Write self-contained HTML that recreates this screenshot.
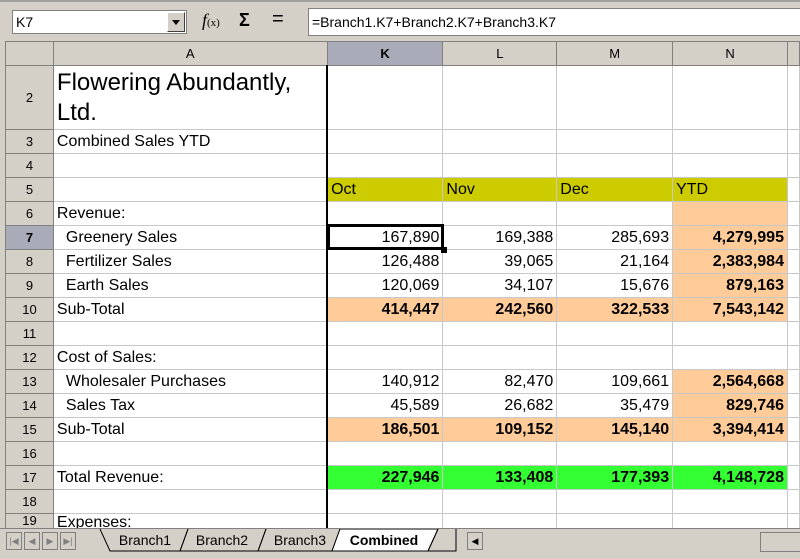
<!DOCTYPE html>
<html><head><meta charset="utf-8"><style>
*{margin:0;padding:0;box-sizing:border-box}
body{width:800px;height:559px;overflow:hidden;background:#d4d0c8;font-family:"Liberation Sans",sans-serif;position:relative}
.tb{position:absolute;left:0;top:0;width:800px;height:41px;background:#d4d0c8;border-top:2px solid #a0a0a0}
.nb{position:absolute;left:12px;top:8px;width:175px;height:24px;background:#fff;border:1px solid #808080;font-size:14px;line-height:22px;padding-left:3px}
.dd{position:absolute;right:1px;top:1px;width:18px;height:20px;background:#d4d0c8;border:1px solid #404040;border-top-color:#fff;border-left-color:#fff}
.dd:after{content:"";position:absolute;left:4px;top:7px;border:4px solid transparent;border-top:5px solid #000}
.fx{position:absolute;left:202px;top:8px;font-family:"Liberation Serif",serif;font-style:italic;font-size:18px}
.fx small{font-size:11px;font-style:normal}
.sg{position:absolute;left:239px;top:8px;font-size:18px;font-weight:bold}
.eq{position:absolute;left:272px;top:6px;font-size:20px}
.fi{position:absolute;left:308px;top:6px;width:492px;height:28px;background:#fff;border:1px solid #808080;border-right:none;font-size:14px;line-height:26px;padding-left:3px}
table{position:absolute;left:5px;top:41px;border-collapse:collapse;table-layout:fixed;background:#fff}
td{border:1px solid #c8c8c8;height:24px;font-size:16px;white-space:nowrap;overflow:hidden;padding:0 3px;line-height:22px}
td.h{background:#d4d0c8;border:1px solid #808080;text-align:center;font-size:13px}
td.s{background:#a9abb8;font-weight:bold}
td.a{border-right:2px solid #000}
.r{text-align:right}.b{font-weight:bold}
.y{background:#cccc00}.o{background:#ffcc99}.g{background:#33ff33}
.i{padding-left:12px}
.sel{position:absolute;left:327px;top:224px;width:117px;height:26px;border:3px solid #000}
.sel:after{content:"";position:absolute;right:-6px;bottom:-6px;width:6px;height:6px;background:#000}
.tabs{position:absolute;left:0;top:528px;width:800px;height:31px;background:#d4d0c8;border-top:1px solid #808080}
.nav{position:absolute;top:3px;width:16px;height:18px;border:1px solid #808080;background:#d4d0c8;font-size:9px;text-align:center;line-height:16px;color:#808080}
.tab{position:absolute;top:0;height:22px;font-size:14px;line-height:22px;text-align:center}
.sb{position:absolute;left:760px;top:3px;width:40px;height:20px;background:#d4d0c8;border:1px solid #808080;border-right:none}
</style></head><body>
<div class="tb">
<div class="nb">K7<div class="dd"></div></div>
<div class="fx">f<small>(x)</small></div>
<div class="sg">Σ</div>
<div class="eq">=</div>
<div class="fi">=Branch1.K7+Branch2.K7+Branch3.K7</div>
</div>
<table>
<colgroup><col style="width:48px"><col style="width:274px"><col style="width:116px"><col style="width:114px"><col style="width:116px"><col style="width:115px"><col style="width:12px"></colgroup>
<tr><td class="h">&nbsp;</td><td class="h a" style="border-right:1px solid #808080">A</td><td class="h s">K</td><td class="h">L</td><td class="h">M</td><td class="h">N</td><td class="h"></td></tr>
<tr style="height:64px"><td class="h" style="height:64px">2</td><td class="a" style="font-size:24px;line-height:30px;white-space:normal;height:64px">Flowering Abundantly, Ltd.</td><td></td><td></td><td></td><td></td><td></td></tr>
<tr><td class="h">3</td><td class="a">Combined Sales YTD</td><td></td><td></td><td></td><td></td><td></td></tr>
<tr><td class="h">4</td><td class="a"></td><td></td><td></td><td></td><td></td><td></td></tr>
<tr><td class="h">5</td><td class="a"></td><td class="y">Oct</td><td class="y">Nov</td><td class="y">Dec</td><td class="y">YTD</td><td></td></tr>
<tr><td class="h">6</td><td class="a">Revenue:</td><td></td><td></td><td></td><td class="o"></td><td></td></tr>
<tr><td class="h s">7</td><td class="a i">Greenery Sales</td><td class="r">167,890</td><td class="r">169,388</td><td class="r">285,693</td><td class="r b o">4,279,995</td><td></td></tr>
<tr><td class="h">8</td><td class="a i">Fertilizer Sales</td><td class="r">126,488</td><td class="r">39,065</td><td class="r">21,164</td><td class="r b o">2,383,984</td><td></td></tr>
<tr><td class="h">9</td><td class="a i">Earth Sales</td><td class="r">120,069</td><td class="r">34,107</td><td class="r">15,676</td><td class="r b o">879,163</td><td></td></tr>
<tr><td class="h">10</td><td class="a">Sub-Total</td><td class="r b o">414,447</td><td class="r b o">242,560</td><td class="r b o">322,533</td><td class="r b o">7,543,142</td><td></td></tr>
<tr><td class="h">11</td><td class="a"></td><td></td><td></td><td></td><td></td><td></td></tr>
<tr><td class="h">12</td><td class="a">Cost of Sales:</td><td></td><td></td><td></td><td></td><td></td></tr>
<tr><td class="h">13</td><td class="a i">Wholesaler Purchases</td><td class="r">140,912</td><td class="r">82,470</td><td class="r">109,661</td><td class="r b o">2,564,668</td><td></td></tr>
<tr><td class="h">14</td><td class="a i">Sales Tax</td><td class="r">45,589</td><td class="r">26,682</td><td class="r">35,479</td><td class="r b o">829,746</td><td></td></tr>
<tr><td class="h">15</td><td class="a">Sub-Total</td><td class="r b o">186,501</td><td class="r b o">109,152</td><td class="r b o">145,140</td><td class="r b o">3,394,414</td><td></td></tr>
<tr><td class="h">16</td><td class="a"></td><td></td><td></td><td></td><td></td><td></td></tr>
<tr><td class="h">17</td><td class="a">Total Revenue:</td><td class="r b g">227,946</td><td class="r b g">133,408</td><td class="r b g">177,393</td><td class="r b g">4,148,728</td><td></td></tr>
<tr><td class="h">18</td><td class="a"></td><td></td><td></td><td></td><td></td><td></td></tr>
<tr><td class="h" style="line-height:14px;vertical-align:top">19</td><td class="a" style="line-height:14px;vertical-align:top;padding-top:2px">Expenses:</td><td></td><td></td><td></td><td></td><td></td></tr>
</table>
<div class="sel"></div>
<div class="tabs">
<div class="nav" style="left:6px">|◀</div><div class="nav" style="left:24px">◀</div><div class="nav" style="left:42px">▶</div><div class="nav" style="left:60px">▶|</div>
<svg style="position:absolute;left:0;top:0" width="470" height="24">
<polyline points="100,0 110,22 180,22 188,0" fill="none" stroke="#000"/>
<polyline points="188,0 180,22 258,22 266,0" fill="none" stroke="#000"/>
<polyline points="266,0 258,22 332,22 340,0" fill="none" stroke="#000"/>
<polygon points="340,0 332,22 428,22 438,0" fill="#fff" stroke="#000"/>
<polyline points="438,0 428,22 456,22 456,0" fill="none" stroke="#000"/>
</svg>
<div class="tab" style="left:108px;width:74px">Branch1</div>
<div class="tab" style="left:186px;width:72px">Branch2</div>
<div class="tab" style="left:264px;width:72px">Branch3</div>
<div class="tab" style="left:338px;width:92px;font-weight:bold">Combined</div>
<div class="nav" style="left:467px;color:#000;background:#d4d0c8">◀</div>
<div class="sb"></div>
</div>
</body></html>
